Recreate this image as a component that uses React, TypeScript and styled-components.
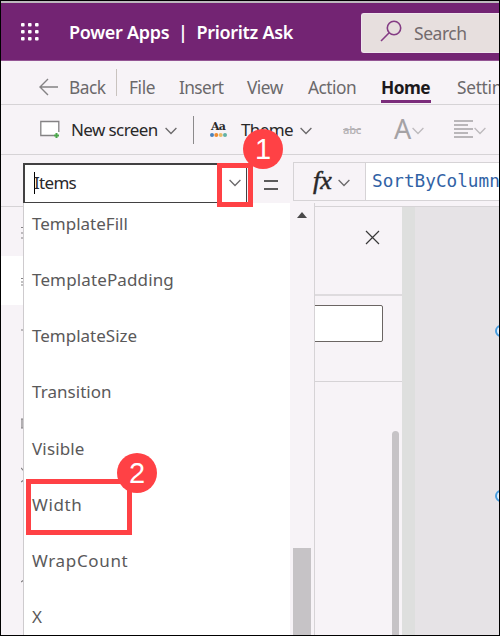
import React from "react";
import styled, { createGlobalStyle } from "styled-components";

const sans = '"Noto Sans", "Open Sans", sans-serif';
const tint = "#f7f3f7";
const rule = "#d6d3d6";
const red = "#ff4145";

const Global = createGlobalStyle`
  * { box-sizing: border-box; }
  body { margin: 0; font-family: ${sans}; overflow: hidden; }
  svg { display: block; flex: none; }
`;

const Screen = styled.div`
  position: relative;
  width: 500px;
  height: 636px;
  display: flex;
  flex-direction: column;
  overflow: hidden;
  background: ${tint};
  border: 1px solid #000;
`;

const Header = styled.header`
  height: 60px;
  flex: none;
  display: flex;
  align-items: center;
  padding-left: 20px;
  background: #732473;
  border-top: 2px solid #bdb9bd;
  border-bottom: 1px solid #945594;
`;

const Brand = styled.div`
  width: 312px;
  padding-left: 30px;
  color: #fff;
  font-weight: 600;
  font-size: 18px;
  line-height: 24px;
  letter-spacing: -0.3px;
  white-space: pre;
  padding-top: 1px;
`;

const Search = styled.div`
  flex: 1;
  height: 40px;
  margin: 2px 0 0 10px;
  padding-left: 18px;
  display: flex;
  align-items: center;
  gap: 12px;
  background: #e7dfde;
  border: 1px solid #efe6ee;
  border-right: 0;
  border-radius: 3px 0 0 3px;
  color: #736b6d;
  font-size: 17.5px;
  letter-spacing: -0.45px;

  svg {
    margin-top: -4px;
  }
`;

const MenuBar = styled.nav`
  height: 44px;
  flex: none;
  display: flex;
  padding-left: 37px;
  border-bottom: 1px solid ${rule};
`;

const MenuItem = styled.div<{ $w: number; $active?: boolean; $track?: number }>`
  width: ${(p) => p.$w}px;
  flex: none;
  height: 43px;
  padding-top: 15px;
  line-height: 24px;
  font-size: 17.3px;
  white-space: nowrap;
  letter-spacing: ${(p) => p.$track ?? -0.5}px;
  color: ${(p) => (p.$active ? "#1c191c" : "#6b696b")};
  font-weight: ${(p) => (p.$active ? 700 : 400)};
`;

const Underlined = styled.span`
  display: block;
  width: 50px;
  height: 27px;
  border-bottom: 3px solid #7b2c7b;
`;

const BackIcon = styled.div`
  width: 31px;
  flex: none;
  padding-top: 17px;
`;

const MenuDivider = styled.i`
  width: 1px;
  flex: none;
  height: 27px;
  margin: 8px 12px 0 10px;
  background: #c9c3bf;
`;

const ToolBar = styled.div`
  height: 50px;
  flex: none;
  display: flex;
  align-items: center;
  padding-left: 39px;
  border-bottom: 1px solid ${rule};
`;

const ToolLabel = styled.span<{ $w: number; $track: number }>`
  width: ${(p) => p.$w}px;
  flex: none;
  padding-top: 1px;
  font-size: 17px;
  line-height: 24px;
  letter-spacing: ${(p) => p.$track}px;
  color: #292829;
  white-space: nowrap;
`;

const ToolDivider = styled.i`
  width: 1px;
  height: 28px;
  margin: 0 15px 0 16px;
  background: #8c8a8c;
`;

const ThemeIcon = styled.div`
  width: 31px;
  margin: -2px 0 0 1px;
  font: 700 11px/12px "DejaVu Serif", serif;
  letter-spacing: -0.8px;
  text-indent: 1px;
  color: #292829;
`;

const Strike = styled.span`
  width: 51px;
  margin-left: 31px;
  font: 600 11px/14px "Open Sans", sans-serif;
  color: #b5b2b5;
  text-decoration: line-through;
  letter-spacing: -0.2px;
`;

const FontColor = styled.span`
  width: 18px;
  margin-top: -1px;
  font-size: 27px;
  line-height: 30px;
  color: #a5a2a5;
`;

const Align = styled.div`
  margin: -1px 0 0 30px;
`;

const FormulaBar = styled.div`
  height: 52px;
  flex: none;
  display: flex;
  align-items: flex-start;
  padding: 7px 0 0 22px;
  border-bottom: 1px solid ${rule};
`;

const Combo = styled.div`
  width: 224px;
  height: 40px;
  margin-top: 1px;
  padding: 0 5px 1px 9px;
  display: flex;
  align-items: center;
  justify-content: space-between;
  background: #fff;
  border: 2px solid #424142;
  border-bottom-width: 1px;
  border-right-width: 1px;
  font-size: 17px;
  letter-spacing: -0.7px;
  color: #292829;

  svg {
    margin-top: -2px;
  }
`;

const Caret = styled.span`
  border-left: 1px solid #000;
  line-height: 22px;
  display: block;
  text-indent: -1px;
`;

const Equals = styled.div`
  width: 46px;
  padding: 18px 0 0 17px;
`;

const FxButton = styled.div`
  width: 73px;
  height: 39px;
  display: flex;
  align-items: center;
  padding-left: 19px;
  gap: 6px;
  border: 1px solid ${rule};
  font: italic 400 26px/28px "Liberation Serif", serif;
  -webkit-text-stroke: 0.5px #292829;
  color: #292829;
  padding-bottom: 2px;

  svg {
    margin-top: 3px;
  }
`;

const Formula = styled.div`
  flex: 1;
  height: 39px;
  padding-left: 6px;
  background: #fff;
  border: solid ${rule};
  border-width: 1px 0;
  overflow: hidden;
  font: 17.7px/36px "DejaVu Sans Mono", monospace;
  color: #3162a5;
`;

const Body = styled.main`
  flex: 1;
  min-height: 0;
  display: flex;
`;

const Rail = styled.aside`
  width: 22px;
  flex: none;
`;

const RailSelected = styled.div`
  height: 49px;
  margin-top: 49px;
  background: #fff;
`;

const Panel = styled.section`
  width: 379px;
  flex: none;
  display: flex;
  flex-direction: column;
`;

const PanelHead = styled.div`
  height: 89px;
  flex: none;
  display: flex;
  justify-content: flex-end;
  padding: 23px 22px 0 0;
  border-bottom: 2px solid #dedbde;
`;

const PanelSearch = styled.div`
  height: 86px;
  flex: none;
  padding: 9px 19px 0 150px;
  border-bottom: 1px solid ${rule};
`;

const Field = styled.div`
  height: 37px;
  background: #fff;
  border: 1px solid #6b6563;
  border-radius: 2px;
`;

const PanelBody = styled.div`
  flex: 1;
  display: flex;
  justify-content: flex-end;
  padding: 49px 3px 0 0;
`;

const PanelThumb = styled.div`
  width: 7px;
  background: #c6c3c6;
  border-radius: 4px 4px 0 0;
`;

const Canvas = styled.section`
  flex: 1;
  position: relative;
  background: #e6e3e6;
  border-left: 13px solid #dedfde;
`;

const Handle = styled.i<{ $y: number }>`
  position: absolute;
  left: 80px;
  top: ${(p) => p.$y}px;
  width: 12px;
  height: 12px;
  border: 2px solid #4a9ede;
  border-radius: 50%;
  background: #e7f3ff;
`;

const Dropdown = styled.div`
  position: absolute;
  left: 22px;
  top: 202px;
  width: 292px;
  height: 432px;
  display: flex;
  overflow: hidden;
  background: #fff;
  border-left: 1px solid #cecbce;
  border-right: 1px solid #d6d3d6;
`;

const Options = styled.ul`
  flex: 1;
  margin: 0;
  padding: 0 0 0 8px;
  list-style: none;
`;

const Option = styled.li<{ $track: number }>`
  height: 56.15px;
  padding-top: 9px;
  font-size: 17px;
  line-height: 24px;
  letter-spacing: ${(p) => p.$track}px;
  color: #5a595a;
`;

const ScrollTrack = styled.div`
  width: 24px;
  background: ${tint};
  display: flex;
  flex-direction: column;
  justify-content: space-between;
  padding: 9px 3px 0 3px;
`;

const Up = styled.i`
  width: 0;
  margin-left: 4px;
  border: 5px solid transparent;
  border-top: 0;
  border-bottom: 6px solid #4a494a;
`;

const Thumb = styled.div`
  height: 87px;
  width: 18px;
  background: #c6c3c6;
`;

const Mark = styled.div<{ $x: number; $y: number; $w: number; $h: number }>`
  position: absolute;
  left: ${(p) => p.$x}px;
  top: ${(p) => p.$y}px;
  width: ${(p) => p.$w}px;
  height: ${(p) => p.$h}px;
  border: 5px solid ${red};
`;

const Badge = styled.div<{ $x: number; $y: number }>`
  position: absolute;
  left: ${(p) => p.$x}px;
  top: ${(p) => p.$y}px;
  width: 40px;
  height: 40px;
  border-radius: 50%;
  background: ${red};
  color: #fff;
  text-align: center;
  font: 29px/41px "Liberation Sans", sans-serif;
`;

const RailIcons = styled.svg`
  position: absolute;
  left: 20px;
  top: 206px;
`;

const Chevron = ({ color = "#6b696b" }: { color?: string }) => (
  <svg width="12" height="10" viewBox="0 -2 12 10" fill="none" stroke={color} strokeWidth="1.3">
    <path d="M.6 1 6 6.5 11.4 1" />
  </svg>
);

const options: [string, number][] = [
  ["TemplateFill", 0],
  ["TemplatePadding", 0.13],
  ["TemplateSize", 0],
  ["Transition", 0.05],
  ["Visible", 0.15],
  ["Width", 0.6],
  ["WrapCount", 0.65],
  ["X", 0],
];

export default function App() {
  return (
    <>
      <Global />
      <Screen>
        <Header>
          <svg width="18" height="18" fill="#fff">
            {[0, 7, 14].map((y) => [0, 7, 14].map((x) => (
              <rect key={`${x}-${y}`} x={x} y={y} width="3.6" height="3.6" rx="1" />
            )))}
          </svg>
          <Brand>{"Power Apps  |  Prioritz Ask"}</Brand>
          <Search>
            <svg width="22" height="22" fill="none" stroke="#843c84" strokeWidth="1.6">
              <circle cx="14" cy="8" r="6.7" />
              <path d="M9.2 12.8 1 21" />
            </svg>
            Search
          </Search>
        </Header>

        <MenuBar>
          <BackIcon>
            <svg width="20" height="18" fill="none" stroke="#848284" strokeWidth="1.4">
              <path d="M20 9H2M10 1 2 9l8 8" />
            </svg>
          </BackIcon>
          <MenuItem $w={37}>Back</MenuItem>
          <MenuDivider />
          <MenuItem $w={50} $track={-0.4}>File</MenuItem>
          <MenuItem $w={68} $track={-0.6}>Insert</MenuItem>
          <MenuItem $w={61}>View</MenuItem>
          <MenuItem $w={73}>Action</MenuItem>
          <MenuItem $w={76} $active>
            <Underlined>Home</Underlined>
          </MenuItem>
          <MenuItem $w={70} $track={-0.3}>Settings</MenuItem>
        </MenuBar>

        <ToolBar>
          <svg width="31" height="20" fill="none">
            <path d="M.8 1.5h18v14H.8z" fill="#fff" />
            <path d="M14 15.5H.8V1.5h18V12" stroke="#848284" strokeWidth="1.3" />
            <path d="M14 15.5h5M16.5 13v5" stroke="#4ca64c" strokeWidth="2" />
          </svg>
          <ToolLabel $w={94} $track={-0.6}>New screen</ToolLabel>
          <Chevron />
          <ToolDivider />
          <ThemeIcon>
            Aa
            <svg width="17" height="4">
              <circle cx="2" cy="2" r="2" fill="#4a82bd" />
              <circle cx="6.3" cy="2" r="2" fill="#ef8b31" />
              <circle cx="10.7" cy="2" r="2" fill="#e7bd6b" />
              <circle cx="15" cy="2" r="2" fill="#63b2a5" />
            </svg>
          </ThemeIcon>
          <ToolLabel $w={59} $track={-0.6}>Theme</ToolLabel>
          <Chevron />
          <Strike>abc</Strike>
          <FontColor>A</FontColor>
          <Chevron color="#bdbabd" />
          <Align>
            <svg width="20" height="18" stroke="#a5a2a5" strokeWidth="1.3">
              <path d="M0 1h19M0 5h14M0 9h19M0 13h14M0 17h19" />
            </svg>
          </Align>
          <Chevron color="#bdbabd" />
        </ToolBar>

        <FormulaBar>
          <Combo>
            <Caret>Items</Caret>
            <Chevron />
          </Combo>
          <Equals>
            <svg width="15" height="10" stroke="#292829" strokeWidth="1.5">
              <path d="M0 1h14M0 9h14" />
            </svg>
          </Equals>
          <FxButton>
            fx
            <Chevron />
          </FxButton>
          <Formula>SortByColumns</Formula>
        </FormulaBar>

        <Body>
          <Rail>
            <RailSelected />
          </Rail>
          <Panel>
            <PanelHead>
              <svg width="15" height="15" stroke="#393839" strokeWidth="1.2">
                <path d="m1 1 13 13M14 1 1 14" />
              </svg>
            </PanelHead>
            <PanelSearch>
              <Field />
            </PanelSearch>
            <PanelBody>
              <PanelThumb />
            </PanelBody>
          </Panel>
          <Canvas>
            <Handle $y={118} />
            <Handle $y={283} />
          </Canvas>
        </Body>

        <RailIcons width="3" height="400" stroke="#848284" strokeWidth="1.2">
          <path d="M0 20.5h3M0 26h3M0 31h3M0 71.5h3M0 75h3M0 78h3M0 123h3M1 212v9M0 212h3M0 221h3M0 261l3 3M0 275l3-2M0 375l3-2" />
        </RailIcons>

        <Dropdown>
          <Options>
            {options.map(([name, track]) => (
              <Option key={name} $track={track}>{name}</Option>
            ))}
          </Options>
          <ScrollTrack>
            <Up />
            <Thumb />
          </ScrollTrack>
        </Dropdown>

        <Mark $x={216} $y={162} $w={36} $h={44} />
        <Badge $x={242} $y={128}>1</Badge>
        <Mark $x={25} $y={478} $w={106} $h={56} />
        <Badge $x={116} $y={452}>2</Badge>
      </Screen>
    </>
  );
}
